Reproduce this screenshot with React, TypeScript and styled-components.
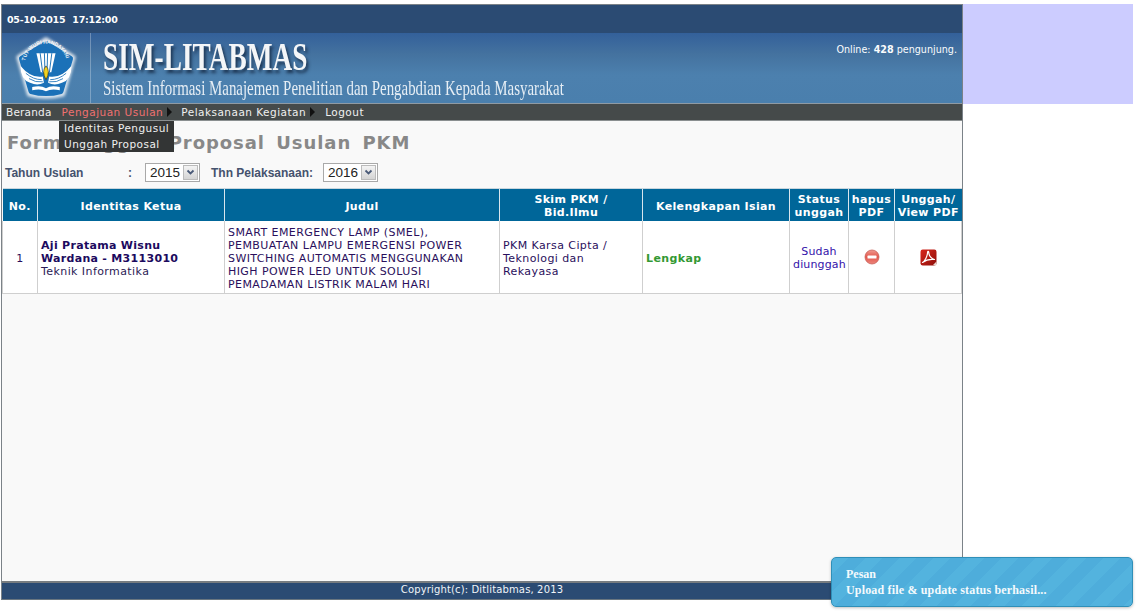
import styled, { createGlobalStyle } from "styled-components";

const GlobalStyle = createGlobalStyle`
  html, body {
    margin: 0;
    padding: 0;
    background: #fff;
    overflow: hidden;
  }
  body {
    font-family: "DejaVu Sans", Verdana, sans-serif;
  }
`;

const Page = styled.div`
  position: relative;
  display: flex;
  align-items: flex-start;
  width: 1139px;
  height: 611px;
  padding: 4px 0 0 1px;
  box-sizing: border-box;
  overflow: hidden;
`;

const Frame = styled.div`
  width: 962px;
  height: 596px;
  box-sizing: border-box;
  display: flex;
  flex-direction: column;
  border: 1px solid #7b8288;
  border-bottom-color: #6a7680;
`;

const SidePanel = styled.div`
  width: 170px;
  height: 100px;
  background: #ccccff;
`;

const TopBar = styled.div`
  height: 28px;
  flex: none;
  display: flex;
  align-items: center;
  padding-left: 5px;
  background: #2b4b73;
  color: #fff;
  font-size: 9.5px;
  font-weight: bold;
  letter-spacing: -0.25px;
  word-spacing: 4px;
`;

const Banner = styled.div`
  position: relative;
  height: 70px;
  flex: none;
  display: flex;
  background: linear-gradient(#33609a 0%, #44729f 30%, #4c80ae 60%, #4a7fad 100%);
  border-bottom: 1px solid #8f9aa3;
  box-sizing: content-box;
`;

const LogoBox = styled.div`
  width: 88px;
  flex: none;
  display: flex;
  align-items: center;
  justify-content: center;
  border-right: 1px solid rgba(255, 255, 255, 0.28);
`;

const BrandText = styled.div`
  padding-left: 12px;
  display: flex;
  flex-direction: column;
  color: #fff;
  font-family: "Liberation Serif", "Times New Roman", serif;
`;

const BrandTitle = styled.div`
  height: 42px;
  font-size: 40px;
  line-height: 47px;
  font-weight: bold;
  white-space: nowrap;
  transform: scaleX(0.683);
  transform-origin: left center;
  color: #f4f6f8;
  text-shadow: 3px 3px 4px #1b3350;
`;

const BrandSub = styled.div`
  font-size: 21px;
  line-height: 26px;
  white-space: nowrap;
  transform: scaleX(0.71);
  transform-origin: left center;
  color: #e6eef5;
`;

const Online = styled.div`
  position: absolute;
  top: 11px;
  right: 5px;
  color: #fafcfd;
  font-size: 9.6px;
`;

const MenuBar = styled.nav`
  position: relative;
  height: 16px;
  flex: none;
  display: flex;
  align-items: center;
  background: #454a4a;
  border-bottom: 1px solid #8a8f90;
  color: #f0f0f0;
  font-size: 10.5px;
  letter-spacing: 0.48px;
`;

const MenuItem = styled.span<{ $active?: boolean; $gap: number; $tight?: boolean }>`
  margin-left: ${(p) => p.$gap}px;
  color: ${(p) => (p.$active ? "#f07070" : "#f0f0f0")};
  letter-spacing: ${(p) => (p.$tight ? "0.2px" : "inherit")};
  white-space: nowrap;
`;

const Caret = styled.span`
  width: 0;
  height: 0;
  margin-left: 4px;
  border-left: 5px solid #111;
  border-top: 5px solid transparent;
  border-bottom: 5px solid transparent;
`;

const Dropdown = styled.div`
  position: absolute;
  z-index: 3;
  top: 17px;
  left: 57px;
  width: 115px;
  height: 31px;
  box-sizing: border-box;
  padding: 0 5px;
  background: #333535;
  color: #f0f0f0;
  font-size: 10.5px;
  line-height: 15.5px;
  letter-spacing: 0.47px;
  white-space: nowrap;
`;

const Content = styled.main`
  flex: 1;
  display: flex;
  flex-direction: column;
  background: #f9f9f9;
  min-height: 0;
`;

const Heading = styled.h1`
  margin: 11px 0 0 5px;
  height: 22px;
  font-size: 18px;
  line-height: 22px;
  font-weight: bold;
  color: #888;
  letter-spacing: 0.95px;
  word-spacing: 4px;
  white-space: nowrap;
`;

const FilterRow = styled.div`
  display: flex;
  align-items: center;
  height: 19px;
  margin: 9px 0 0 3px;
  font-family: "Liberation Sans", Arial, sans-serif;
  font-size: 12px;
  font-weight: bold;
  color: #45526e;
`;

const FilterLabel = styled.label<{ $width: number }>`
  width: ${(p) => p.$width}px;
  flex: none;
  white-space: nowrap;
`;

const SelectBox = styled.div`
  position: relative;
  width: 55px;
  height: 19px;
  flex: none;
  margin-right: 11px;
`;

const Select = styled.select`
  appearance: none;
  width: 100%;
  height: 100%;
  padding: 0 0 0 4px;
  box-sizing: border-box;
  border: 1px solid #a9a9a9;
  border-radius: 0;
  background: #fff;
  color: #222;
  font-family: "Liberation Sans", Arial, sans-serif;
  font-size: 13.5px;
`;

const SelectArrow = styled.span`
  position: absolute;
  top: 2px;
  right: 2px;
  width: 15px;
  height: 15px;
  display: flex;
  align-items: center;
  justify-content: center;
  background: linear-gradient(#f4f4f4, #d4d4d4);
  border: 1px solid #bbb;
  box-sizing: border-box;
`;

const Table = styled.table`
  width: 959px;
  margin: 6px 0 0 0;
  border-collapse: collapse;
  table-layout: fixed;
  font-size: 11px;
  line-height: 13px;
`;

const Col = styled.col<{ $width: number }>`
  width: ${(p) => p.$width}px;
`;

const Th = styled.th`
  height: 32px;
  padding: 3px 0 0;
  box-sizing: border-box;
  background: #006699;
  border-left: 1px solid #d8e6ee;
  border-top: 1px solid #c9d6de;
  color: #fff;
  font-size: 11px;
  font-weight: bold;
  letter-spacing: 0.35px;
  text-align: center;
  &:first-child {
    border-left: none;
  }
`;

const Td = styled.td<{ $center?: boolean }>`
  height: 73px;
  padding: 3px 3px 0;
  box-sizing: border-box;
  background: #fff;
  border: 1px solid #cfcfcf;
  border-top: none;
  color: #2a0f5c;
  letter-spacing: 0.42px;
  vertical-align: middle;
  text-align: ${(p) => (p.$center ? "center" : "left")};
`;

const Name = styled.b`
  color: #1c0a5e;
  letter-spacing: 0.3px;
`;

const Major = styled.span`
  color: #2b1a55;
`;

const Complete = styled.b`
  color: #339933;
  letter-spacing: 0.4px;
`;

const Uploaded = styled.span`
  color: #3311aa;
  letter-spacing: 0.15px;
`;

const IconCell = styled.span`
  display: block;
  margin-top: -2px;
  line-height: 0;
`;

const Footer = styled.footer`
  flex: none;
  height: 18px;
  padding-bottom: 3px;
  box-sizing: border-box;
  display: flex;
  align-items: center;
  justify-content: center;
  border-top: 2px solid #777c80;
  background: #2b4b73;
  color: #f0f4f8;
  font-size: 10px;
  letter-spacing: 0.14px;
`;

const Toast = styled.div`
  position: absolute;
  z-index: 5;
  left: 831px;
  top: 557px;
  width: 302px;
  height: 50px;
  box-sizing: border-box;
  padding: 8px 14px;
  border: 1px solid #2f8fb8;
  border-radius: 5px;
  box-shadow: 0 1px 3px rgba(0, 0, 0, 0.25);
  background: repeating-linear-gradient(
    135deg,
    #53b3de 0 12px,
    #4eaddb 12px 24px
  );
  color: #f4fafd;
  font-family: "Liberation Serif", "Times New Roman", serif;
  font-size: 12px;
  font-weight: bold;
  line-height: 16px;
`;

const ToastBody = styled.div`
  font-weight: bold;
  letter-spacing: 0.17px;
`;

function Logo() {
  return (
    <svg width="70" height="66" viewBox="0 0 66 62">
      <defs>
        <filter id="glow" x="-20%" y="-20%" width="140%" height="140%">
          <feGaussianBlur stdDeviation="1.5" />
        </filter>
        <path id="arc" d="M13 28 A20 20 0 0 1 53 28" />
      </defs>
      <path d="M33 4 L59 21 L49 56 Q33 60 17 56 L7 21 Z" fill="#fff" opacity="0.8" stroke="#fff" strokeWidth="4" strokeLinejoin="round" filter="url(#glow)" />
      <path d="M33 8 L56 22 L47 53 Q33 57 19 53 L10 22 Z" fill="#1b71b8" stroke="#1b71b8" strokeWidth="5" strokeLinejoin="round" />
      <text fontSize="4.8" fill="#f6f6f6" fontFamily="Liberation Sans, sans-serif" fontWeight="bold">
        <textPath href="#arc" startOffset="6%">TUT WURI HANDAYANI</textPath>
      </text>
      <path d="M24 17 L42 17 L38 35 L28 35 Z" fill="#fff" />
      <path d="M27.5 17 L29.8 35 M31.5 17 L32 35 M34.5 17 L34 35 M38.5 17 L36.2 35" stroke="#1b71b8" strokeWidth="0.9" />
      <path d="M33 29 Q37.5 34 33 42 Q28.5 34 33 29 Z" fill="#f3d21d" stroke="#2a2a1a" strokeWidth="0.6" />
      <path d="M30 39 Q19 41 9 29 Q9 42 18 45 Q25 48 31 45 Z" fill="#fff" />
      <path d="M36 39 Q47 41 57 29 Q57 42 48 45 Q41 48 35 45 Z" fill="#fff" />
      <path d="M14 36 Q21 42 29 42 M52 36 Q45 42 37 42 M17 41 Q23 45 30 44 M49 41 Q43 45 36 44" stroke="#1b71b8" strokeWidth="0.8" fill="none" />
      <path d="M20 49 Q28 47 33 50 Q38 47 46 49 L46 52 Q38 50 33 53 Q28 50 20 52 Z" fill="#fff" />
    </svg>
  );
}

function SelectChevron() {
  return (
    <svg width="9" height="7" viewBox="0 0 9 7">
      <path d="M1.5 1.5 L4.5 4.5 L7.5 1.5" fill="none" stroke="#4a5a78" strokeWidth="1.8" />
    </svg>
  );
}

function RemoveIcon() {
  return (
    <svg width="16" height="16" viewBox="0 0 16 16">
      <defs>
        <linearGradient id="rm" x1="0" y1="0" x2="0" y2="1">
          <stop offset="0" stopColor="#f09a90" />
          <stop offset="0.5" stopColor="#e2574c" />
          <stop offset="1" stopColor="#ec857c" />
        </linearGradient>
      </defs>
      <circle cx="8" cy="8" r="7" fill="url(#rm)" stroke="#c9625a" strokeWidth="0.8" />
      <rect x="3.5" y="6.6" width="9" height="3" rx="0.6" fill="#fff" />
    </svg>
  );
}

function PdfIcon() {
  return (
    <svg width="17" height="17" viewBox="0 0 17 17">
      <defs>
        <linearGradient id="pdf" x1="0" y1="0" x2="1" y2="1">
          <stop offset="0" stopColor="#d8261c" />
          <stop offset="1" stopColor="#8e0f0a" />
        </linearGradient>
      </defs>
      <rect x="0.5" y="0.5" width="16" height="16" rx="2.2" fill="url(#pdf)" />
      <path
        d="M2.5 13.5 C5 12 7.5 7 7.6 3 C7.7 2 8.6 2 8.7 3 C8.9 6.5 11 9.5 14.5 10.5 C11 10 6.5 10.5 2.5 13.5 Z"
        fill="none"
        stroke="#fff"
        strokeWidth="1.2"
        strokeLinejoin="round"
      />
      <path d="M13 16 L16.5 12.5 L16.5 15 Q16.5 16.5 15 16.5 Z" fill="#e9d8d0" />
    </svg>
  );
}

const columnWidths = [35, 187, 275, 143, 147, 59, 46, 67];

function App() {
  return (
    <>
      <GlobalStyle />
      <Page>
        <Frame>
          <TopBar>05-10-2015 17:12:00</TopBar>
          <Banner>
            <LogoBox>
              <Logo />
            </LogoBox>
            <BrandText>
              <BrandTitle>SIM-LITABMAS</BrandTitle>
              <BrandSub>Sistem Informasi Manajemen Penelitian dan Pengabdian Kepada Masyarakat</BrandSub>
            </BrandText>
            <Online>
              Online: <b>428</b> pengunjung.
            </Online>
          </Banner>
          <MenuBar>
            <MenuItem $gap={4} $tight>Beranda</MenuItem>
            <MenuItem $gap={10} $active>Pengajuan Usulan</MenuItem>
            <Caret />
            <MenuItem $gap={9}>Pelaksanaan Kegiatan</MenuItem>
            <Caret />
            <MenuItem $gap={10}>Logout</MenuItem>
            <Dropdown>
              Identitas Pengusul
              <br />
              Unggah Proposal
            </Dropdown>
          </MenuBar>
          <Content>
            <Heading>Form Unggah Proposal Usulan PKM</Heading>
            <FilterRow>
              <FilterLabel $width={123}>Tahun Usulan</FilterLabel>
              <FilterLabel $width={17}>:</FilterLabel>
              <SelectBox>
                <Select defaultValue="2015">
                  <option>2015</option>
                </Select>
                <SelectArrow>
                  <SelectChevron />
                </SelectArrow>
              </SelectBox>
              <FilterLabel $width={112}>Thn Pelaksanaan:</FilterLabel>
              <SelectBox>
                <Select defaultValue="2016">
                  <option>2016</option>
                </Select>
                <SelectArrow>
                  <SelectChevron />
                </SelectArrow>
              </SelectBox>
            </FilterRow>
            <Table>
              <colgroup>
                {columnWidths.map((w, i) => (
                  <Col key={i} $width={w} />
                ))}
              </colgroup>
              <thead>
                <tr>
                  <Th>No.</Th>
                  <Th>Identitas Ketua</Th>
                  <Th>Judul</Th>
                  <Th>
                    Skim PKM /<br />
                    Bid.Ilmu
                  </Th>
                  <Th>Kelengkapan Isian</Th>
                  <Th>
                    Status
                    <br />
                    unggah
                  </Th>
                  <Th>
                    hapus
                    <br />
                    PDF
                  </Th>
                  <Th>
                    Unggah/
                    <br />
                    View PDF
                  </Th>
                </tr>
              </thead>
              <tbody>
                <tr>
                  <Td $center>1</Td>
                  <Td>
                    <Name>
                      Aji Pratama Wisnu
                      <br />
                      Wardana - M3113010
                    </Name>
                    <br />
                    <Major>Teknik Informatika</Major>
                  </Td>
                  <Td>
                    SMART EMERGENCY LAMP (SMEL),
                    <br />
                    PEMBUATAN LAMPU EMERGENSI POWER
                    <br />
                    SWITCHING AUTOMATIS MENGGUNAKAN
                    <br />
                    HIGH POWER LED UNTUK SOLUSI
                    <br />
                    PEMADAMAN LISTRIK MALAM HARI
                  </Td>
                  <Td>
                    PKM Karsa Cipta /
                    <br />
                    Teknologi dan
                    <br />
                    Rekayasa
                  </Td>
                  <Td>
                    <Complete>Lengkap</Complete>
                  </Td>
                  <Td $center>
                    <Uploaded>
                      Sudah
                      <br />
                      diunggah
                    </Uploaded>
                  </Td>
                  <Td $center>
                    <IconCell>
                      <RemoveIcon />
                    </IconCell>
                  </Td>
                  <Td $center>
                    <IconCell>
                      <PdfIcon />
                    </IconCell>
                  </Td>
                </tr>
              </tbody>
            </Table>
          </Content>
          <Footer>Copyright(c): Ditlitabmas, 2013</Footer>
        </Frame>
        <SidePanel />
        <Toast>
          Pesan
          <ToastBody>Upload file &amp; update status berhasil...</ToastBody>
        </Toast>
      </Page>
    </>
  );
}

export default App;
